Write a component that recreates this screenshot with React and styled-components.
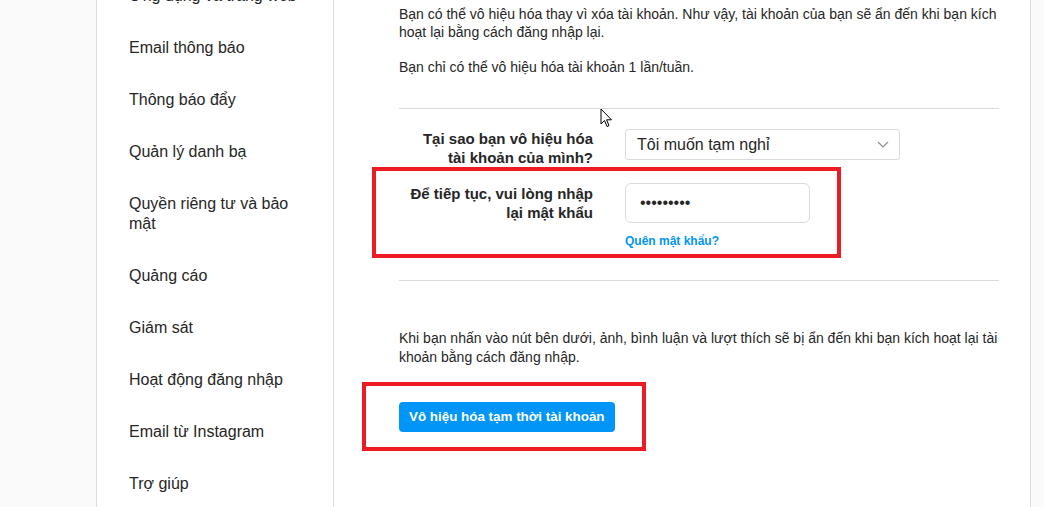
import React from 'react'
import styled, { createGlobalStyle } from 'styled-components'

const GlobalStyle = createGlobalStyle`
  html, body {
    margin: 0;
    padding: 0;
    background: #fafafa;
    font-family: "Liberation Sans", Arial, sans-serif;
    color: #262626;
    overflow: hidden;
  }
  * { box-sizing: border-box; }
`

const Page = styled.div`
  position: relative;
  height: 507px;
  padding-left: 96px;
  display: flex;
  overflow: hidden;
`

const Card = styled.div`
  width: 935px;
  display: flex;
  background: #fff;
  border-left: 1px solid #dbdbdb;
  border-right: 1px solid #dbdbdb;
`

const Sidebar = styled.ul`
  width: 237px;
  flex-shrink: 0;
  margin: 0;
  padding: 0;
  list-style: none;
  border-right: 1px solid #dbdbdb;
`

const SideList = styled.div`
  margin-top: -30px;
`

const SideItem = styled.li`
  padding: 16px 16px 16px 32px;
  font-size: 16px;
  line-height: 20px;
  color: #262626;
`

const Main = styled.main`
  flex: 1;
  padding: 5px 31px 0 65px;
`

const Text = styled.p`
  margin: ${p => p.$top || 0}px 0 0;
  font-size: 14px;
  line-height: ${p => p.$lh || 18}px;
  color: #262626;
`

const Divider = styled.hr`
  margin: ${p => p.$top}px 0 0;
  border: 0;
  border-top: 1px solid #dbdbdb;
  height: 0;
`

const Row = styled.div`
  display: flex;
  align-items: flex-start;
  margin-top: ${p => p.$top}px;
`

const Label = styled.label`
  width: 194px;
  flex-shrink: 0;
  margin-right: 32px;
  padding-left: 2.5px;
  text-align: right;
  font-size: 15px;
  font-weight: 700;
  line-height: 19px;
  color: #262626;
  padding-top: ${p => p.$pad || 0}px;
`

const Field = styled.div`
  display: flex;
  flex-direction: column;
  align-items: flex-start;
`

const Select = styled.div`
  width: 275px;
  height: 31px;
  margin-top: 1px;
  border: 1px solid #dbdbdb;
  border-radius: 3px;
  background: #fff;
  display: flex;
  align-items: center;
  justify-content: space-between;
  padding: 0 10px 0 11px;
  font-size: 16px;
  color: #262626;
`

const Input = styled.input`
  width: 185px;
  height: 40px;
  border: 1px solid #dbdbdb;
  border-radius: 6px;
  background: #fff;
  padding: 0 14px;
  font-family: "Liberation Sans", Arial, sans-serif;
  font-size: 16px;
  color: #262626;
  outline: none;
`

const Link = styled.a`
  margin-top: 10px;
  font-size: 12px;
  line-height: 16px;
  font-weight: 700;
  color: #0095f6;
  text-decoration: none;
`

const Button = styled.button`
  margin-top: 35px;
  padding: 5px 9px;
  border: 1px solid transparent;
  border-radius: 4px;
  background: #0095f6;
  color: #fff;
  font-family: "Liberation Sans", Arial, sans-serif;
  font-size: 13.4px;
  font-weight: 700;
  line-height: 18px;
`

const Highlight = styled.div`
  position: absolute;
  border: 4px solid #ed1c24;
  pointer-events: none;
`

const Cursor = styled.svg`
  position: absolute;
  left: 600px;
  top: 108px;
`

const sideItems = [
  'Ứng dụng và trang web',
  'Email thông báo',
  'Thông báo đẩy',
  'Quản lý danh bạ',
  'Quyền riêng tư và bảo mật',
  'Quảng cáo',
  'Giám sát',
  'Hoạt động đăng nhập',
  'Email từ Instagram',
  'Trợ giúp'
]

const App = () => {
  return (
    <>
      <GlobalStyle />
      <Page>
        <Card>
          <Sidebar>
            <SideList>
              {sideItems.map(item => (
                <SideItem key={item}>{item}</SideItem>
              ))}
            </SideList>
          </Sidebar>
          <Main>
            <Text>
              Bạn có thể vô hiệu hóa thay vì xóa tài khoản. Như vậy, tài khoản của bạn sẽ ẩn đến khi bạn kích hoạt lại bằng cách đăng nhập lại.
            </Text>
            <Text $top={17}>Bạn chỉ có thể vô hiệu hóa tài khoản 1 lần/tuần.</Text>
            <Divider $top={32} />

            <Row $top={19}>
              <Label $pad={1}>Tại sao bạn vô hiệu hóa tài khoản của mình?</Label>
              <Select>
                <span>Tôi muốn tạm nghỉ</span>
                <svg width="12" height="7" viewBox="0 0 12 7">
                  <polyline points="1,1 6,6 11,1" fill="none" stroke="#8e8e8e" strokeWidth="1.2" />
                </svg>
              </Select>
            </Row>

            <Row $top={16}>
              <Label $pad={1}>Để tiếp tục, vui lòng nhập lại mật khẩu</Label>
              <Field>
                <Input type="password" value="123456789" readOnly />
                <Link>Quên mật khẩu?</Link>
              </Field>
            </Row>

            <Divider $top={31} />

            <Text $top={48} $lh={19}>
              Khi bạn nhấn vào nút bên dưới, ảnh, bình luận và lượt thích sẽ bị ẩn đến khi bạn kích hoạt lại tài khoản bằng cách đăng nhập.
            </Text>
            <Button>Vô hiệu hóa tạm thời tài khoản</Button>
          </Main>
        </Card>

        <Highlight style={{ left: 372, top: 167, width: 469, height: 91 }} />
        <Highlight style={{ left: 362, top: 382, width: 284, height: 69 }} />

        <Cursor width="13" height="20" viewBox="0 0 13 20">
          <path d="M1 1 L1 16 L4.5 12.5 L7 18.5 L9 17.7 L6.6 11.8 L11.5 11.8 Z" fill="#fff" stroke="#000" strokeWidth="1" strokeLinejoin="round" />
        </Cursor>
      </Page>
    </>
  )
}

export default App
